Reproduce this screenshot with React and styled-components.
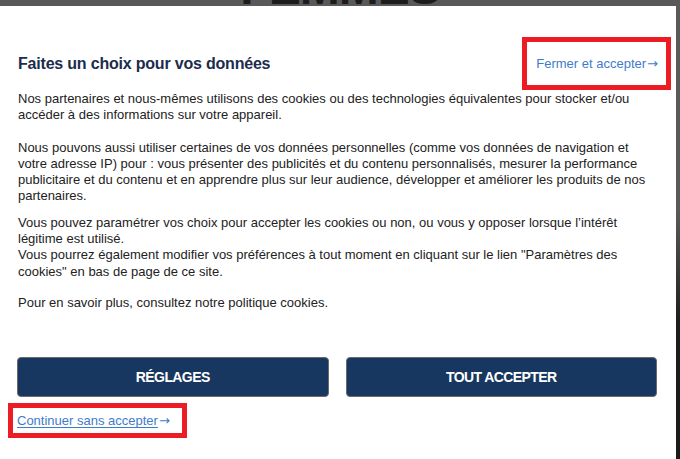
import React from 'react';
import styled, { createGlobalStyle } from 'styled-components';

const GlobalStyle = createGlobalStyle`
  html, body {
    margin: 0;
    padding: 0;
    background: #595959;
    font-family: "Liberation Sans", Arial, sans-serif;
  }
  * {
    box-sizing: border-box;
  }
`;

const paragraphs = [
  {
    gap: 16,
    lines: ['Nos partenaires et nous-mêmes utilisons des cookies ou des technologies équivalentes pour stocker et/ou accéder à des informations sur votre appareil.']
  },
  {
    gap: 10,
    lines: ['Nous pouvons aussi utiliser certaines de vos données personnelles (comme vos données de navigation et votre adresse IP) pour : vous présenter des publicités et du contenu personnalisés, mesurer la performance publicitaire et du contenu et en apprendre plus sur leur audience, développer et améliorer les produits de nos partenaires.']
  },
  {
    gap: 15,
    lines: [
      'Vous pouvez paramétrer vos choix pour accepter les cookies ou non, ou vous y opposer lorsque l\u2019intérêt légitime est utilisé.',
      'Vous pourrez également modifier vos préférences à tout moment en cliquant sur le lien "Paramètres des cookies" en bas de page de ce site.'
    ]
  },
  {
    gap: 0,
    lines: ['Pour en savoir plus, consultez notre politique cookies.']
  }
];

class App extends React.Component {
  render() {
    return (
      <Page>
        <GlobalStyle />
        <TopBar>
          <Masthead>FEMMES</Masthead>
        </TopBar>
        <Stage>
          <Modal>
            <Header>
              <Title>Faites un choix pour vos données</Title>
              <Highlight pad="0 8px 0 9px" height={53}>
                <TextLink>Fermer et accepter</TextLink>
                <Arrow>→</Arrow>
              </Highlight>
            </Header>
            <Body>
              {paragraphs.map((para, i) => (
                <Paragraph key={i} gap={para.gap}>
                  {para.lines.map((line, j) => (
                    <React.Fragment key={j}>
                      {j > 0 ? <br /> : null}
                      {line}
                    </React.Fragment>
                  ))}
                </Paragraph>
              ))}
            </Body>
            <Actions>
              <ActionButton>RÉGLAGES</ActionButton>
              <ActionButton>TOUT ACCEPTER</ActionButton>
            </Actions>
            <Footer>
              <Highlight pad="0 12px 0 4px" height={35}>
                <TextLink underline>Continuer sans accepter</TextLink>
                <Arrow>→</Arrow>
              </Highlight>
            </Footer>
          </Modal>
          <EdgeStrip />
        </Stage>
      </Page>
    );
  }
}

const Page = styled.div`
  width: 680px;
  height: 459px;
  display: flex;
  flex-direction: column;
  overflow: hidden;
  background: #595959;
`;

const TopBar = styled.div`
  height: 6px;
  flex: none;
  display: flex;
  justify-content: center;
  align-items: flex-end;
  overflow: hidden;
  padding-left: 0;
`;

const Masthead = styled.div`
  font-family: "Liberation Sans", Arial, sans-serif;
  font-weight: bold;
  font-size: 48px;
  line-height: 0.74;
  letter-spacing: -1px;
  color: #1c1c1c;
`;

const Stage = styled.div`
  flex: 1;
  display: flex;
  min-height: 0;
`;

const Modal = styled.div`
  width: 676px;
  flex: none;
  background: #ffffff;
  display: flex;
  flex-direction: column;
`;

const EdgeStrip = styled.div`
  flex: 1;
  background: linear-gradient(to bottom, #5a5a5a 0%, #5a5a5a 45%, #1d1d1d 70%, #1b1b1b 100%);
`;

const Header = styled.div`
  display: flex;
  align-items: center;
  justify-content: space-between;
  margin-top: 31px;
  padding: 0 5px 0 18px;
`;

const Title = styled.h1`
  margin: 0;
  font-size: 16px;
  font-weight: bold;
  color: #1b2c4c;
  letter-spacing: -0.2px;
`;

const Highlight = styled.div`
  display: inline-flex;
  align-items: center;
  height: ${props => props.height}px;
  padding: ${props => props.pad};
  border: 5px solid #ec1c24;
`;

const TextLink = styled.span`
  font-size: 13px;
  color: #3f7bcb;
  text-decoration: ${props => props.underline ? 'underline' : 'none'};
  text-underline-offset: 2px;
`;

const Arrow = styled.span`
  font-family: "DejaVu Sans", sans-serif;
  font-size: 13px;
  line-height: 1;
  color: #3f7bcb;
  margin-left: 1px;
`;

const Body = styled.div`
  padding: 1px 18px 0 18px;
  color: #222222;
  font-size: 13px;
  line-height: 16.3px;
`;

const Paragraph = styled.p`
  margin: 0 0 ${props => props.gap}px 0;
`;

const Actions = styled.div`
  display: grid;
  grid-template-columns: 1fr 1fr;
  gap: 17px;
  margin-top: 46px;
  padding: 0 19px 0 17px;
`;

const ActionButton = styled.button`
  height: 40px;
  background: #183760;
  border: 1px solid #6a6a6a;
  border-radius: 4px;
  color: #ffffff;
  font-family: "Liberation Sans", Arial, sans-serif;
  font-weight: bold;
  font-size: 14px;
  letter-spacing: -0.6px;
  cursor: pointer;
`;

const Footer = styled.div`
  display: flex;
  margin-top: 6px;
  padding-left: 8px;
`;

export default App;
